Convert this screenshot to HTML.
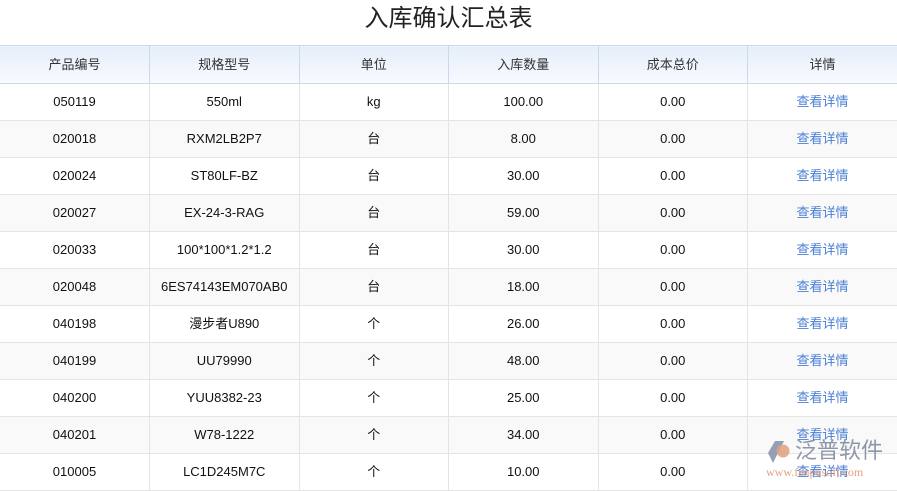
<!DOCTYPE html>
<html><head><meta charset="utf-8"><style>
body{margin:0;width:897px;height:485px;overflow:hidden;background:#fff;font-family:"Liberation Sans","Noto Sans CJK SC",sans-serif;position:relative}
h1{margin:0;height:46px;line-height:38px;text-align:center;font-size:24px;font-weight:normal;color:#222}
table{border-collapse:collapse;width:897px;table-layout:fixed;position:absolute;top:45px;left:0}
th{height:37px;padding:0;line-height:37px;font-weight:normal;font-size:13px;color:#333;background:linear-gradient(#e6eefa,#f8fbff);border:1px solid #c9d8ea;border-left:1px solid #d3dfee}
td{height:36px;padding:0;line-height:36px;text-align:center;font-size:13px;color:#111;border:1px solid #e4e4e4;border-top:none;overflow:hidden;white-space:nowrap}
tr:nth-child(odd) td{background:#f9f9f9}
td:last-child{color:#4a7fd6}
th:first-child,td:first-child{border-left:none}
th:last-child,td:last-child{border-right:none}
.wm{position:absolute;left:766px;top:437px}
</style></head><body>
<h1>入库确认汇总表</h1>
<table>
<tr><th>产品编号</th><th>规格型号</th><th>单位</th><th>入库数量</th><th>成本总价</th><th>详情</th></tr>
<tr><td>050119</td><td>550ml</td><td>kg</td><td>100.00</td><td>0.00</td><td>查看详情</td></tr>
<tr><td>020018</td><td>RXM2LB2P7</td><td>台</td><td>8.00</td><td>0.00</td><td>查看详情</td></tr>
<tr><td>020024</td><td>ST80LF-BZ</td><td>台</td><td>30.00</td><td>0.00</td><td>查看详情</td></tr>
<tr><td>020027</td><td>EX-24-3-RAG</td><td>台</td><td>59.00</td><td>0.00</td><td>查看详情</td></tr>
<tr><td>020033</td><td>100*100*1.2*1.2</td><td>台</td><td>30.00</td><td>0.00</td><td>查看详情</td></tr>
<tr><td>020048</td><td>6ES74143EM070AB0</td><td>台</td><td>18.00</td><td>0.00</td><td>查看详情</td></tr>
<tr><td>040198</td><td>漫步者U890</td><td>个</td><td>26.00</td><td>0.00</td><td>查看详情</td></tr>
<tr><td>040199</td><td>UU79990</td><td>个</td><td>48.00</td><td>0.00</td><td>查看详情</td></tr>
<tr><td>040200</td><td>YUU8382-23</td><td>个</td><td>25.00</td><td>0.00</td><td>查看详情</td></tr>
<tr><td>040201</td><td>W78-1222</td><td>个</td><td>34.00</td><td>0.00</td><td>查看详情</td></tr>
<tr><td>010005</td><td>LC1D245M7C</td><td>个</td><td>10.00</td><td>0.00</td><td>查看详情</td></tr>
</table>
<div class="wm">
<svg width="26" height="26" style="position:absolute;left:0;top:2px"><path d="M9 2 L18 2 L7 24 L2 14 Z" fill="#8391a8" opacity=".85"/><circle cx="17" cy="12" r="6.5" fill="#e0a080" opacity=".85"/></svg>
<div style="position:absolute;left:29px;top:0;font-size:22px;line-height:28px;color:#7b879e;opacity:.85;white-space:nowrap">泛普软件</div>
<div style="position:absolute;left:0px;top:28px;font-size:12px;color:#e09070;opacity:.85;white-space:nowrap;font-family:'Liberation Serif',serif">www.fanpusoft.com</div>
</div>
</body></html>
